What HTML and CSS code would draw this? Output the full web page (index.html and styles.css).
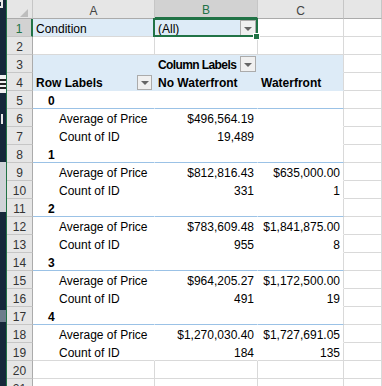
FILE: index.html
```html
<!DOCTYPE html>
<html lang="en">
<head>
    <meta charset="UTF-8">
    <title>Pivot Table</title>
    <link rel="stylesheet" href="styles.css">
</head>
<body>
    <div class="window">
        <div class="edge">
            <div class="edge-dark edge-top"><i class="edge-mark"></i></div>
            <div class="edge-dark" style="height: 65px"></div>
            <div class="edge-icon"><i></i><i></i><i></i></div>
            <div class="edge-dark" style="height: 19px"></div>
            <div class="edge-dark edge-p"><i class="edge-mark"></i></div>
            <div class="edge-dark" style="height: 36px"></div>
            <div class="edge-light" style="height: 50px"></div>
            <div class="edge-dark" style="height: 98px"></div>
            <div class="edge-gray" style="height: 12px"></div>
            <div class="edge-dark" style="height: 80px"></div>
        </div>

        <div class="sheet">
            <div class="row head">
                <div class="corner"></div>
                <div class="ch">A</div>
                <div class="ch active">B</div>
                <div class="ch">C</div>
                <div class="ch"></div>
            </div>

            <div class="row">
                <div class="rh active">1</div>
                <div class="c pg">Condition</div>
                <div class="c pg">(All)<span class="drop"></span><span class="selection"></span><span class="handle"></span></div>
                <div class="c"></div>
                <div class="c"></div>
            </div>
            <div class="row">
                <div class="rh">2</div>
                <div class="c"></div>
                <div class="c"></div>
                <div class="c"></div>
                <div class="c"></div>
            </div>
            <div class="row">
                <div class="rh">3</div>
                <div class="c ph"></div>
                <div class="c ph b tight">Column Labels<span class="drop"></span></div>
                <div class="c ph edge-c"></div>
                <div class="c"></div>
            </div>
            <div class="row">
                <div class="rh">4</div>
                <div class="c ph b">Row Labels<span class="drop drop-a"></span></div>
                <div class="c ph b">No Waterfront</div>
                <div class="c ph b edge-c">Waterfront</div>
                <div class="c"></div>
            </div>

            <!-- 0 -->
            <div class="row">
                <div class="rh">5</div>
                <div class="c pv sep b in1">0</div>
                <div class="c pv sep"></div>
                <div class="c pv sep edge-c"></div>
                <div class="c"></div>
            </div>
            <div class="row">
                <div class="rh">6</div>
                <div class="c pv in2">Average of Price</div>
                <div class="c pv num">$496,564.19</div>
                <div class="c pv num edge-c"></div>
                <div class="c"></div>
            </div>
            <div class="row">
                <div class="rh">7</div>
                <div class="c pv in2">Count of ID</div>
                <div class="c pv num">19,489</div>
                <div class="c pv num edge-c"></div>
                <div class="c"></div>
            </div>

            <!-- 1 -->
            <div class="row">
                <div class="rh">8</div>
                <div class="c pv sep b in1">1</div>
                <div class="c pv sep"></div>
                <div class="c pv sep edge-c"></div>
                <div class="c"></div>
            </div>
            <div class="row">
                <div class="rh">9</div>
                <div class="c pv in2">Average of Price</div>
                <div class="c pv num">$812,816.43</div>
                <div class="c pv num edge-c">$635,000.00</div>
                <div class="c"></div>
            </div>
            <div class="row">
                <div class="rh">10</div>
                <div class="c pv in2">Count of ID</div>
                <div class="c pv num">331</div>
                <div class="c pv num edge-c">1</div>
                <div class="c"></div>
            </div>

            <!-- 2 -->
            <div class="row">
                <div class="rh">11</div>
                <div class="c pv sep b in1">2</div>
                <div class="c pv sep"></div>
                <div class="c pv sep edge-c"></div>
                <div class="c"></div>
            </div>
            <div class="row">
                <div class="rh">12</div>
                <div class="c pv in2">Average of Price</div>
                <div class="c pv num">$783,609.48</div>
                <div class="c pv num edge-c">$1,841,875.00</div>
                <div class="c"></div>
            </div>
            <div class="row">
                <div class="rh">13</div>
                <div class="c pv in2">Count of ID</div>
                <div class="c pv num">955</div>
                <div class="c pv num edge-c">8</div>
                <div class="c"></div>
            </div>

            <!-- 3 -->
            <div class="row">
                <div class="rh">14</div>
                <div class="c pv sep b in1">3</div>
                <div class="c pv sep"></div>
                <div class="c pv sep edge-c"></div>
                <div class="c"></div>
            </div>
            <div class="row">
                <div class="rh">15</div>
                <div class="c pv in2">Average of Price</div>
                <div class="c pv num">$964,205.27</div>
                <div class="c pv num edge-c">$1,172,500.00</div>
                <div class="c"></div>
            </div>
            <div class="row">
                <div class="rh">16</div>
                <div class="c pv in2">Count of ID</div>
                <div class="c pv num">491</div>
                <div class="c pv num edge-c">19</div>
                <div class="c"></div>
            </div>

            <!-- 4 -->
            <div class="row">
                <div class="rh">17</div>
                <div class="c pv sep b in1">4</div>
                <div class="c pv sep"></div>
                <div class="c pv sep edge-c"></div>
                <div class="c"></div>
            </div>
            <div class="row">
                <div class="rh">18</div>
                <div class="c pv in2">Average of Price</div>
                <div class="c pv num">$1,270,030.40</div>
                <div class="c pv num edge-c">$1,727,691.05</div>
                <div class="c"></div>
            </div>
            <div class="row">
                <div class="rh">19</div>
                <div class="c pv last in2">Count of ID</div>
                <div class="c pv last num">184</div>
                <div class="c pv last num edge-c">135</div>
                <div class="c"></div>
            </div>

            <div class="row">
                <div class="rh">20</div>
                <div class="c"></div>
                <div class="c"></div>
                <div class="c"></div>
                <div class="c"></div>
            </div>
            <div class="row">
                <div class="rh">21</div>
                <div class="c"></div>
                <div class="c"></div>
                <div class="c"></div>
                <div class="c"></div>
            </div>
        </div>
    </div>
</body>
</html>
```

FILE: styles.css
```css
body {
    margin: 0;
    width: 382px;
    height: 386px;
    overflow: hidden;
    background: #fff;
    font-family: 'Liberation Sans', Arial, sans-serif;
    font-size: 12px;
    color: #000;
}
.window {
    display: flex;
    height: 386px;
}

/* strip of the window behind */
.edge {
    width: 6px;
    flex-shrink: 0;
    background: #16283a;
    border-right: 1px solid #217346;
    overflow: hidden;
}
.edge-dark {
    background: #16283a;
}
.edge-top {
    height: 10px;
}
.edge-p {
    height: 14px;
    display: flex;
    align-items: center;
}
.edge-mark {
    display: block;
    width: 4px;
    height: 8px;
    border: 2px solid #e8e8e8;
    border-left: none;
    box-sizing: border-box;
}
.edge-top .edge-mark {
    width: 3px;
}
.edge-p .edge-mark {
    width: 2px;
    height: 10px;
    border: none;
    background: #e8e8e8;
    margin-left: 1px;
}
.edge-icon {
    height: 18px;
    background: #f0f0f0;
    display: flex;
    flex-direction: column;
    justify-content: center;
    gap: 2px;
}
.edge-icon i {
    display: block;
    height: 2px;
    background: #222;
}
.edge-light {
    background: #cfd3d8;
}
.edge-gray {
    background: #6d7d8c;
}

/* grid */
.sheet {
    flex: 1;
    display: flex;
    flex-direction: column;
}
.row {
    display: grid;
    grid-template-columns: 26px 122px 103px 86px 1fr;
    height: 18px;
    flex-shrink: 0;
}
.row.head {
    height: 19px;
}
.row > div {
    box-sizing: border-box;
    white-space: nowrap;
    line-height: 14px;
}

.corner,
.ch {
    position: relative;
    background: #e6e6e6;
    border-right: 1px solid #c6c6c6;
    border-bottom: 1px solid #ababab;
}
.corner::after {
    content: "";
    position: absolute;
    right: 4px;
    bottom: 1px;
    border-left: 8px solid transparent;
    border-bottom: 8px solid #bdbdbd;
}
.ch {
    display: flex;
    align-items: flex-end;
    justify-content: center;
    color: #444;
}
.ch.active {
    background: #d2d2d2;
    color: #217346;
    border-bottom: 2px solid #217346;
}

.rh {
    display: flex;
    align-items: flex-end;
    justify-content: center;
    background: #e6e6e6;
    color: #333;
    border-right: 1px solid #ababab;
    border-bottom: 1px solid #c6c6c6;
}
.rh.active {
    background: #d2d2d2;
    color: #217346;
    border-right: 2px solid #217346;
}

.c {
    position: relative;
    display: flex;
    align-items: flex-end;
    padding: 0 3px;
    border-right: 1px solid #d9d9d9;
    border-bottom: 1px solid #d9d9d9;
}

/* pivot */
.pg {
    background: #ddebf7;
}
.ph {
    background: #ddebf7;
    border-color: #ddebf7;
}
.pv {
    border-color: #fff;
}
.ph.edge-c,
.pv.edge-c {
    border-right-color: #d9d9d9;
}
.pv.sep {
    border-bottom-color: #9bc2e6;
}
.pv.last {
    border-bottom-color: #d9d9d9;
}
.b {
    font-weight: bold;
}
.tight {
    letter-spacing: -0.6px;
}
.num {
    justify-content: flex-end;
}
.in1 {
    padding-left: 15px;
}
.in2 {
    padding-left: 26px;
}

/* filter buttons */
.drop {
    position: absolute;
    right: 1px;
    bottom: 0;
    width: 16px;
    height: 16px;
    box-sizing: border-box;
    border: 1px solid #ababab;
    background: #f0f0f0;
}
.drop::after {
    content: "";
    position: absolute;
    left: 3px;
    top: 6px;
    border-left: 4px solid transparent;
    border-right: 4px solid transparent;
    border-top: 4px solid #666;
}
.drop-a {
    right: 2px;
    width: 15px;
    height: 15px;
}
.drop-a::after {
    left: 3px;
    top: 5px;
}

/* active cell */
.selection {
    position: absolute;
    left: -2px;
    right: -1px;
    top: -1px;
    bottom: -1px;
    border: 2px solid #217346;
    z-index: 2;
}
.handle {
    position: absolute;
    right: -3px;
    bottom: -4px;
    width: 5px;
    height: 5px;
    background: #217346;
    border: 1px solid #fff;
    z-index: 3;
}
```
